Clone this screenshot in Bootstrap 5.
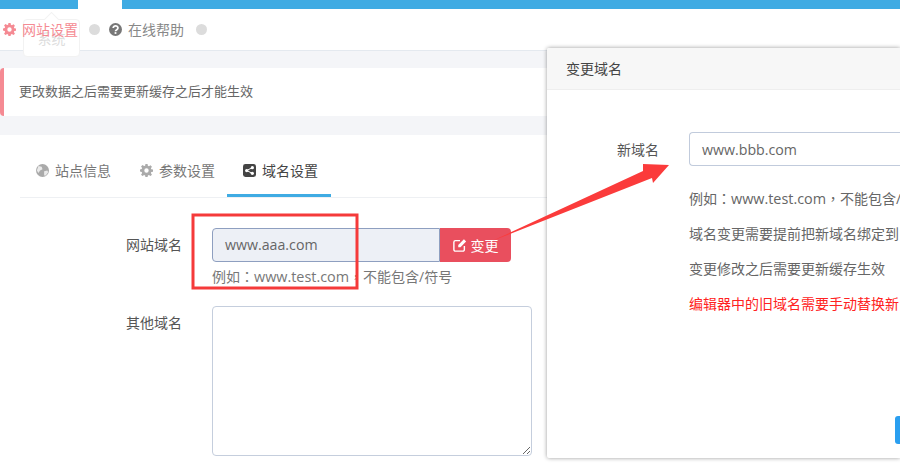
<!DOCTYPE html>
<html lang="zh">
<head>
<meta charset="utf-8">
<title>域名设置</title>
<link href="https://cdn.jsdelivr.net/npm/bootstrap@5.3.0/dist/css/bootstrap.min.css" rel="stylesheet">
<style>
html,body{height:465px;overflow:hidden}
body{width:900px;background:#f4f5f8;color:#555;position:relative;font-family:"Open Sans","Noto Sans CJK SC",sans-serif;font-size:14px}
.p{font-family:"Noto Sans CJK TC",sans-serif}
.lat{font-size:14.4px}
.topbar{height:9px;background:#3fabe3}
.topbar i{display:block;width:44px;height:9px;background:#fff;margin-left:78px}
.crumbs{height:42px;background:#fff;border-bottom:1px solid #e4e9ef;padding-left:3px;gap:6px;position:relative}
.crumbs .t{color:#f58a93}
.crumbs .m{color:#888}
.dot{width:11px;height:11px;border-radius:50%;background:#dcdcdc;margin:0 3px 0 5px}
.dot.a{margin-left:6px}
.ghost{position:absolute;left:23px;top:10px;width:57px;height:38px;border:1px solid #f2f2f2;border-radius:4px;background:#fff;color:#ddd;text-align:center;padding-top:12px;line-height:14px}
.ghost::before{content:"";position:absolute;left:22px;top:-6px;width:11px;height:11px;background:#fff;border:1px solid #f2f2f2;border-right:0;border-bottom:0;transform:rotate(45deg)}
.crumbs span,.crumbs svg{position:relative}
.notice{margin-top:17px;height:48px;background:#fff;border-left:4px solid #f58a93;border-radius:4px 0 0 4px;padding-left:15px;color:#666;line-height:47px;font-size:13px}
.panel{margin-top:19px;background:#fff;height:330px;padding:0 20px}
.tabs{height:63px;border-bottom:1px solid #eef0f3}
.tabs a{display:flex;align-items:center;gap:6px;height:62px;padding:11px 13px 3px 16px;color:#777;text-decoration:none}
.tabs a:nth-child(2){padding-right:12px}
.tabs a.active{color:#444;border-bottom:3px solid #3fabe3;padding-bottom:0}
.lbl{width:162px;text-align:right;color:#555;flex:none;line-height:34px}
.rowx{margin-top:30px;gap:30px}
.fc{height:34px;border:1px solid #8e9fc0;border-radius:4px 0 0 4px;background:#edf0f6;color:#666;width:228px;padding:0 12px;font-size:14.2px;line-height:32px}
.bt{width:71px;height:34px;background:#e94f5e;color:#fff;border-radius:0 4px 4px 0;display:flex;align-items:center;justify-content:center;gap:4px}
.hp{margin-top:4px;color:#777;line-height:21px;white-space:nowrap}
.area{width:320px;height:150px;border:1px solid #c5cedd;border-radius:4px;display:block}
.rowy{margin-top:19px;gap:30px}
.dlg{position:absolute;left:547px;top:48px;width:353px;height:410px;background:#fff;box-shadow:0 0 4px rgba(0,0,0,.4);border-radius:2px 0 0 2px;z-index:2;overflow:hidden}
.dlg-h{height:42px;background:#f7f7f7;border-bottom:1px solid #eee;line-height:41px;padding-left:19px;color:#444}
.dlg-b{padding-top:42px}
.nrow{gap:30px}
.nl{width:112px;text-align:right;flex:none;color:#555;line-height:36px}
.nin{width:211px;height:34px;border:1px solid #c1cbdc;border-right:0;border-radius:4px 0 0 4px;padding:0 12px;font-size:14.2px;line-height:34px;color:#666;white-space:nowrap;flex:none}
.tips{margin-left:142px;white-space:nowrap;color:#666;margin-top:20px}
.tips p{margin:0 0 14px;line-height:21px}
.tips .r{color:#f22}
.go{position:absolute;left:348px;top:368px;width:5px;height:28px;background:#2a9ff0;border-radius:3px 0 0 3px}
.anno{position:absolute;left:0;top:0;z-index:3;pointer-events:none}
</style>
</head>
<body>
<div class="topbar"><i></i></div>
<div class="crumbs d-flex align-items-center">
  <div class="ghost">系统</div>
  <svg width="13" height="13" viewBox="0 0 16 16"><path fill="#f58a93" d="M6.700 0h2.600l.4 2.200 1.300.6 1.900-1.300 1.800 1.800-1.300 1.900.5 1.300 2.100.4v2.600l-2.100.4-.5 1.300 1.300 1.900-1.800 1.800-1.900-1.300-1.300.5-.4 2.100H6.700l-.4-2.100-1.300-.5-1.900 1.300-1.800-1.800 1.300-1.900-.5-1.300L0 9.300V6.700l2.100-.4.500-1.300-1.300-1.900 1.800-1.800 1.900 1.300 1.300-.6zM8 5.300a2.700 2.700 0 1 0 0 5.400 2.700 2.700 0 0 0 0-5.400z"/></svg>
  <span class="t">网站设置</span>
  <div class="dot"></div>
  <svg width="13" height="13" viewBox="0 0 16 16"><circle cx="8" cy="8" r="8" fill="#777"/><path fill="none" stroke="#fff" stroke-width="2.200" d="M5.200 6.200c0-3.400 5.800-3.400 5.800 0 0 2-3 2-3 4"/><rect x="6.900" y="11.200" width="2.200" height="2.200" fill="#fff"/></svg>
  <span class="m">在线帮助</span>
  <div class="dot a"></div>
</div>
<div class="notice">更改数据之后需要更新缓存之后才能生效</div>
<div class="panel">
  <div class="tabs d-flex">
    <a href="#"><svg width="13" height="13" viewBox="0 0 16 16"><circle cx="8" cy="8" r="8" fill="#aaa"/><path fill="#fff" d="M3 2.500l4 1 1 3-3 1.500-2 3-2-3zM10 9l4-1 1 2-3 4-2 0z" opacity=".75"/></svg>站点信息</a>
    <a href="#"><svg width="13" height="13" viewBox="0 0 16 16"><path fill="#aaa" d="M6.700 0h2.600l.4 2.200 1.300.6 1.900-1.300 1.800 1.800-1.300 1.900.5 1.300 2.100.4v2.600l-2.100.4-.5 1.300 1.300 1.900-1.800 1.800-1.900-1.300-1.300.5-.4 2.100H6.700l-.4-2.100-1.300-.5-1.900 1.300-1.800-1.800 1.300-1.900-.5-1.300L0 9.300V6.700l2.100-.4.500-1.300-1.300-1.900 1.800-1.800 1.900 1.300 1.300-.6zM8 5.300a2.700 2.700 0 1 0 0 5.400 2.700 2.700 0 0 0 0-5.400z"/></svg>参数设置</a>
    <a href="#" class="active"><svg width="13" height="13" viewBox="0 0 16 16"><rect width="16" height="16" rx="3" fill="#444"/><g fill="#fff"><circle cx="11.500" cy="4.500" r="2"/><circle cx="4.500" cy="8" r="2"/><circle cx="11.500" cy="11.500" r="2"/></g><path stroke="#fff" stroke-width="1.200" d="M11.500 4.500L4.500 8l7 3.500" fill="none"/></svg>域名设置</a>
  </div>
  <div class="d-flex rowx">
    <div class="lbl">网站域名</div>
    <div>
      <div class="d-flex">
        <div class="fc">www.aaa.com</div>
        <div class="bt"><svg width="14" height="14" viewBox="0 0 16 16"><path fill="none" stroke="#fff" stroke-width="1.600" d="M13 9v4.200a1.800 1.800 0 0 1-1.800 1.800H2.800A1.800 1.800 0 0 1 1 13.200V4.800A1.800 1.800 0 0 1 2.800 3H8"/><path fill="#fff" d="M6 8l6.500-6.500 2.500 2.500-6.500 6.500H6z"/></svg>变更</div>
      </div>
      <div class="hp">例如<span class="p" lang="zh-Hant">：</span><span class="lat">www.test.com</span><span class="p" lang="zh-Hant">，</span>不能包含/符号</div>
    </div>
  </div>
  <div class="d-flex rowy">
    <div class="lbl">其他域名</div>
    <textarea class="area" aria-label="其他域名"></textarea>
  </div>
</div>
<div class="dlg">
  <div class="dlg-h">变更域名</div>
  <div class="dlg-b">
    <div class="d-flex nrow">
      <div class="nl">新域名</div>
      <div class="nin">www.bbb.com</div>
    </div>
    <div class="tips">
      <p>例如<span class="p" lang="zh-Hant">：</span><span class="lat">www.test.com</span><span class="p" lang="zh-Hant">，</span>不能包含/</p>
      <p>域名变更需要提前把新域名绑定到</p>
      <p>变更修改之后需要更新缓存生效</p>
      <p class="r">编辑器中的旧域名需要手动替换新</p>
    </div>
  </div>
  <div class="go"></div>
</div>
<svg class="anno" width="900" height="465" viewBox="0 0 900 465">
  <rect x="193" y="215" width="164" height="73" fill="none" stroke="#f53a3a" stroke-width="3"/>
  <path fill="#fb3b3b" d="M492 241 L643 171 L643 164 L669 165 L653 183 L652 178Z"/>
</svg>
</body>
</html>
